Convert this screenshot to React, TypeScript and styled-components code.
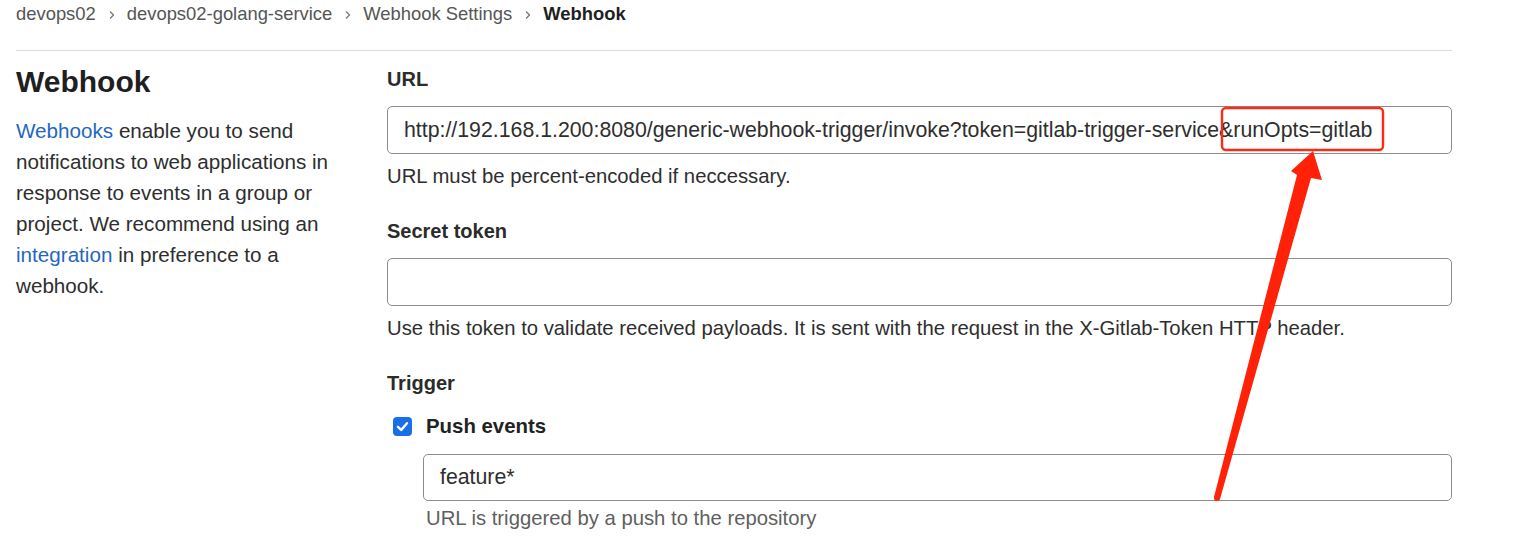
import React from "react";
import styled, { createGlobalStyle } from "styled-components";

const GlobalStyle = createGlobalStyle`
  html, body {
    margin: 0;
    padding: 0;
    background: #ffffff;
  }
  body {
    font-family: "Liberation Sans", Arial, Helvetica, sans-serif;
    color: #2e2e2e;
  }
`;

type Crumb = {
  label: string;
  current?: boolean;
};

const crumbs: Crumb[] = [
  { label: "devops02" },
  { label: "devops02-golang-service" },
  { label: "Webhook Settings" },
  { label: "Webhook", current: true },
];

const Page = () => {
  return (
    <Wrapper>
      <GlobalStyle />
      <Container>
        <Breadcrumbs>
          {crumbs.map((c, i) => (
            <React.Fragment key={c.label}>
              <CrumbItem current={c.current}>{c.label}</CrumbItem>
              {i < crumbs.length - 1 && (
                <Chevron viewBox="0 0 8 12" aria-hidden>
                  <path d="M2 2.5 L5.5 6 L2 9.5" />
                </Chevron>
              )}
            </React.Fragment>
          ))}
        </Breadcrumbs>

        <Layout>
          <Sidebar>
            <Heading>Webhook</Heading>
            <Intro>
              <Link href="#">Webhooks</Link> enable you to send notifications
              to web applications in response to events in a group or
              project. We recommend using an <Link href="#">integration</Link>{" "}
              in preference to a webhook.
            </Intro>
          </Sidebar>

          <Form>
            <Field>
              <Label>URL</Label>
              <TextInput
                readOnly
                value="http://192.168.1.200:8080/generic-webhook-trigger/invoke?token=gitlab-trigger-service&runOpts=gitlab"
              />
              <Help>URL must be percent-encoded if neccessary.</Help>
            </Field>

            <Field>
              <Label>Secret token</Label>
              <TextInput readOnly value="" />
              <Help>
                Use this token to validate received payloads. It is sent with
                the request in the X-Gitlab-Token HTTP header.
              </Help>
            </Field>

            <Field>
              <Label>Trigger</Label>
              <CheckRow>
                <CheckBox>
                  <svg viewBox="0 0 19 19" width="19" height="19">
                    <path d="M5 9.8 L8.2 13 L14 6.2" />
                  </svg>
                </CheckBox>
                <CheckLabel>Push events</CheckLabel>
              </CheckRow>
              <Nested>
                <TextInput readOnly value="feature*" />
                <Help muted indent>
                  URL is triggered by a push to the repository
                </Help>
              </Nested>
            </Field>
          </Form>
        </Layout>
      </Container>

      {/* annotation drawn over the screenshot */}
      <Overlay viewBox="0 0 1540 542" width="1540" height="542">
        <rect
          x="1222"
          y="108"
          width="161"
          height="42"
          rx="4"
          fill="none"
          stroke="#ff2a14"
          strokeWidth="2.4"
        />
        <polygon
          points="1214,497 1297,175 1291,171 1313,151 1322,180 1311,178 1220,499"
          fill="#ff2208"
          strokeLinejoin="round"
        />
        <circle cx="1217" cy="498" r="3" fill="#ff2208" />
      </Overlay>
    </Wrapper>
  );
};

export default function App() {
  return <Page />;
}

const Wrapper = styled.div`
  position: relative;
  width: 1540px;
  height: 542px;
  overflow: hidden;
`;

const Container = styled.div`
  width: 1436px;
  margin-left: 16px;
`;

const Breadcrumbs = styled.nav`
  display: flex;
  align-items: center;
  height: 28px;
  padding-bottom: 22px;
  border-bottom: 1px solid #dcdcdc;
  font-size: 18.4px;
`;

const CrumbItem = styled.span<{ current?: boolean }>`
  color: ${({ current }) => (current ? "#1f1f1f" : "#555555")};
  font-weight: ${({ current }) => (current ? 700 : 400)};
  line-height: 28px;
`;

const Chevron = styled.svg`
  width: 8px;
  height: 12px;
  margin: 1px 11px 0 12px;

  path {
    fill: none;
    stroke: #777777;
    stroke-width: 1.3;
  }
`;

const Layout = styled.div`
  display: grid;
  grid-template-columns: 339px 1fr;
  column-gap: 32px;
  padding-top: 13px;
`;

const Sidebar = styled.div`
  display: flex;
  flex-direction: column;
`;

const Heading = styled.h1`
  margin: 0;
  font-size: 30px;
  line-height: 36px;
  font-weight: 700;
  color: #1f1f1f;
`;

const Intro = styled.p`
  margin: 15px 0 0;
  font-size: 20.65px;
  line-height: 31px;
  color: #2e2e2e;
`;

const Link = styled.a`
  color: #1f68c0;
  text-decoration: none;
`;

const Form = styled.div`
  display: flex;
  flex-direction: column;
  padding-top: 1px;
`;

const Field = styled.div`
  display: flex;
  flex-direction: column;
  margin-bottom: 27px;
`;

const Label = styled.label`
  font-size: 20px;
  line-height: 28px;
  font-weight: 700;
  color: #2b2b2b;
  margin-bottom: 13px;
`;

const TextInput = styled.input`
  box-sizing: border-box;
  width: 100%;
  height: 48px;
  padding: 0 16px;
  border: 1px solid #8c8c8c;
  border-radius: 5px;
  background: #ffffff;
  font-family: "Liberation Sans", Arial, Helvetica, sans-serif;
  font-size: 21.3px;
  color: #2e2e2e;
  outline: none;
`;

const Help = styled.div<{ muted?: boolean; indent?: boolean }>`
  margin-top: ${({ muted }) => (muted ? "3px" : "8px")};
  margin-left: ${({ indent }) => (indent ? "3px" : "0")};
  font-size: 20.3px;
  line-height: 28px;
  color: ${({ muted }) => (muted ? "#5f5f5f" : "#2e2e2e")};
`;

const CheckRow = styled.div`
  display: flex;
  align-items: center;
  gap: 14px;
  height: 28px;
  padding-left: 6px;
  margin-top: 2px;
`;

const CheckBox = styled.span`
  display: inline-flex;
  width: 19px;
  height: 19px;
  border-radius: 4px;
  background: #1a6fe8;

  path {
    fill: none;
    stroke: #ffffff;
    stroke-width: 2.4;
    stroke-linecap: round;
    stroke-linejoin: round;
  }
`;

const CheckLabel = styled.span`
  font-size: 20.4px;
  font-weight: 700;
  color: #222222;
  line-height: 28px;
`;

const Nested = styled.div`
  display: flex;
  flex-direction: column;
  padding-left: 36px;
  margin-top: 14px;

  input {
    height: 47px;
  }
`;

const Overlay = styled.svg`
  position: absolute;
  top: 0;
  left: 0;
  pointer-events: none;
`;
